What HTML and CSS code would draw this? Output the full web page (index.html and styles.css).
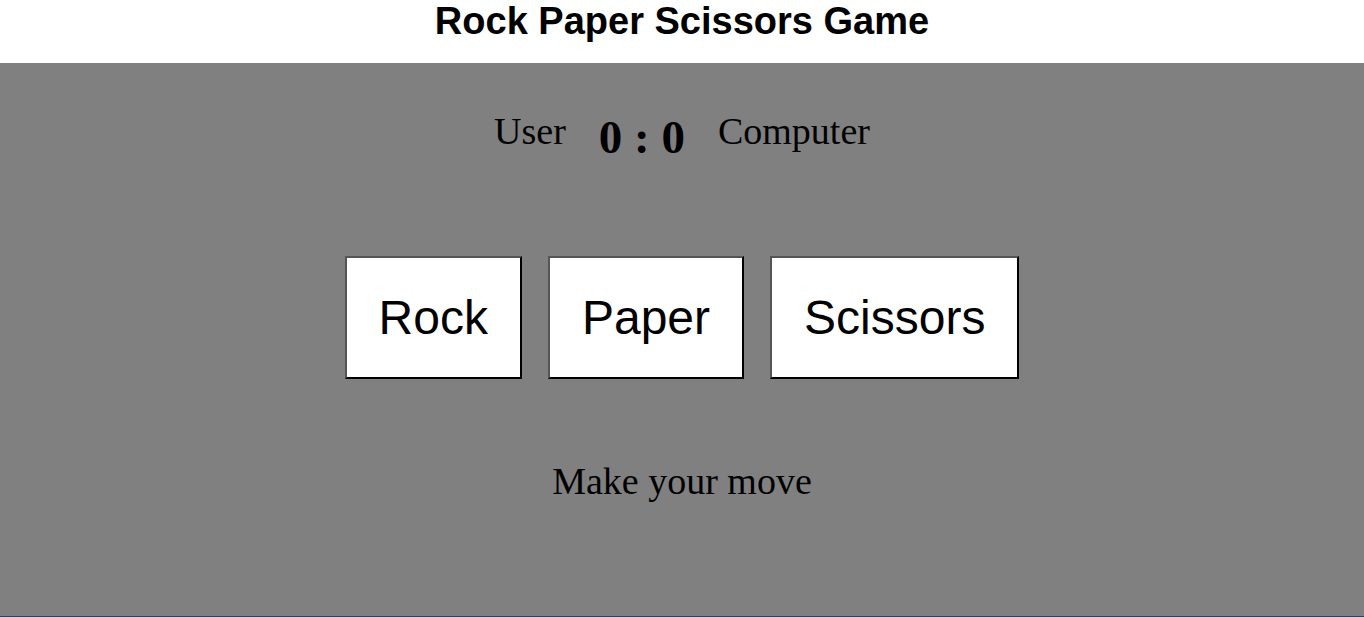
FILE: index.html
```html
<!DOCTYPE html>
<html>
<head>
<meta charset="utf-8">
<title>Rock Paper Scissors Game</title>
<link rel="stylesheet" href="styles.css">
</head>
<body>
<header class="top">
  <h1 class="title">Rock Paper Scissors Game</h1>
</header>
<main class="game">
  <div class="scoreboard">
    <span class="label">User</span>
    <span class="score">0 : 0</span>
    <span class="label">Computer</span>
  </div>
  <div class="choices">
    <button class="choice">Rock</button>
    <button class="choice">Paper</button>
    <button class="choice">Scissors</button>
  </div>
  <p class="message">Make your move</p>
</main>
</body>
</html>
```

FILE: styles.css
```css
html, body {
  margin: 0;
  padding: 0;
  height: 100%;
}
body {
  font-family: "Liberation Serif", "Times New Roman", serif;
  background: #ffffff;
  display: flex;
  flex-direction: column;
}
.top {
  height: 63px;
  display: flex;
  justify-content: center;
  align-items: flex-start;
}
.title {
  margin: 0;
  padding-top: 0;
  font-family: "Liberation Sans", Arial, sans-serif;
  font-weight: bold;
  font-size: 38px;
  line-height: 42px;
  color: #000;
}
.game {
  flex: 1;
  background: #808080;
  border-bottom: 1px solid #3a3a5a;
  display: flex;
  flex-direction: column;
  align-items: center;
}
.scoreboard {
  display: flex;
  align-items: flex-start;
  margin-top: 46px;
  gap: 33px;
}
.label {
  font-size: 38px;
  line-height: 44px;
  color: #000;
}
.score {
  font-size: 47px;
  font-weight: bold;
  line-height: 54px;
  margin-top: 1px;
  color: #000;
}
.choices {
  display: flex;
  gap: 26px;
  margin-top: 92px;
}
.choice {
  font-family: "Liberation Sans", Arial, sans-serif;
  font-size: 48px;
  padding: 31px 32px;
  background: #ffffff;
  color: #000;
  border: 2px outset #767676;
  border-color: #555555 #000000 #000000 #555555;
  border-radius: 0;
  line-height: 57px;
  cursor: pointer;
}
.message {
  margin: 80px 0 0;
  font-size: 38px;
  color: #000;
}
```
